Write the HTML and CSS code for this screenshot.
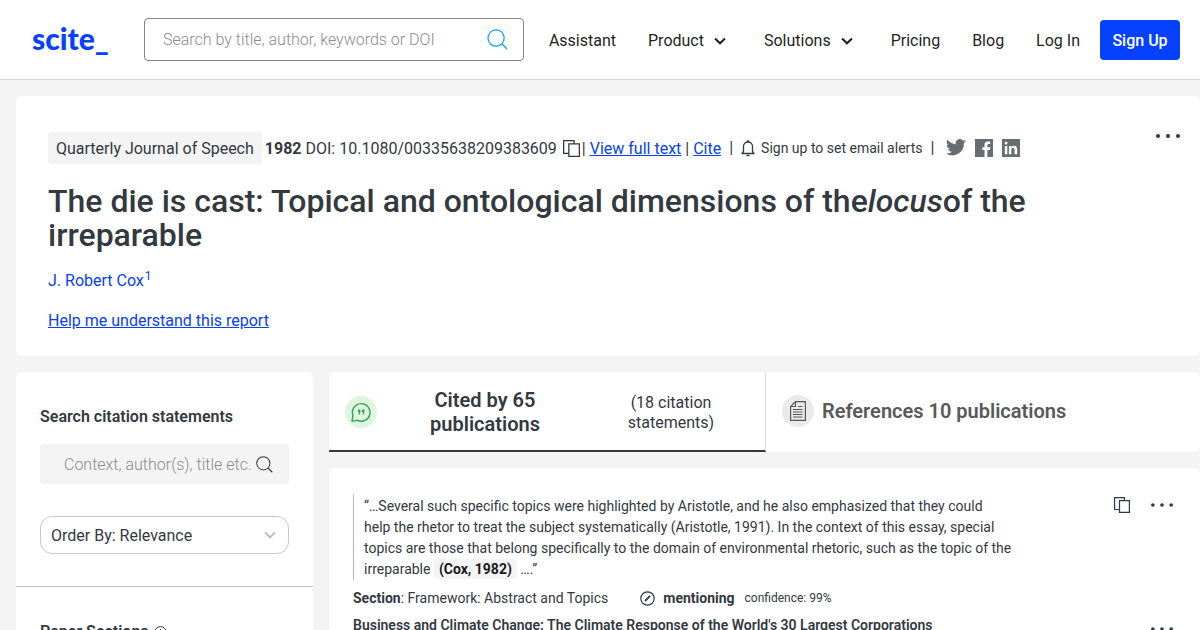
FILE: index.html
```html
<!DOCTYPE html>
<html lang="en">
<head>
<meta charset="utf-8">
<meta name="viewport" content="width=device-width, initial-scale=1">
<title>The die is cast: Topical and ontological dimensions of the locus of the irreparable</title>
<link rel="stylesheet" href="styles.css">
</head>
<body>
<svg class="defs" width="0" height="0" aria-hidden="true">
  <symbol id="copy" viewBox="0 0 16 16"><path d="M5 12.500H.6V.6H10.400V3M5.500 3.600H15.400V15.400H5.500Z" fill="none" stroke="currentColor" stroke-width="1.200"/></symbol>
  <symbol id="search" viewBox="0 0 22 22"><circle cx="9.500" cy="9.500" r="8.500" fill="none" stroke="currentColor" stroke-width="1.300"/><path d="M15.500 15.500L21 21" stroke="currentColor" stroke-width="1.500"/></symbol>
  <symbol id="chevron" viewBox="0 0 12 8"><path d="M1 1.500L6 6.300L11 1.500" fill="none" stroke="currentColor" stroke-width="2"/></symbol>
  <symbol id="dots" viewBox="0 0 24 4"><circle cx="2" cy="2" r="2"/><circle cx="12" cy="2" r="2"/><circle cx="22" cy="2" r="2"/></symbol>
</svg>

<header class="header">
  <a class="logo" href="#">scite_</a>
  <form class="search" role="search">
    <input class="search-input" type="search" aria-label="Search papers" placeholder="Search by title, author, keywords or DOI">
    <button class="icon-button search-button" type="button" aria-label="Search"><svg width="21" height="21"><use href="#search"/></svg></button>
  </form>
  <nav class="nav">
    <a class="nav-link" href="#">Assistant</a>
    <button class="nav-link" type="button">Product <svg width="12" height="8"><use href="#chevron"/></svg></button>
    <button class="nav-link" type="button">Solutions <svg width="12" height="8"><use href="#chevron"/></svg></button>
    <a class="nav-link" href="#">Pricing</a>
    <a class="nav-link" href="#">Blog</a>
    <a class="nav-link" href="#">Log In</a>
  </nav>
  <a class="signup" href="#">Sign Up</a>
</header>

<main class="page">
  <section class="card paper">
    <div class="paper-meta">
      <span class="journal">Quarterly Journal of Speech</span>
      <span class="meta-text"><strong>1982</strong> DOI: 10.1080/00335638209383609</span>
      <button class="icon-button copy-doi" type="button" aria-label="Copy DOI"><svg width="17" height="17"><use href="#copy"/></svg></button>
      <span class="meta-text">| <a href="#">View full text</a> | <a href="#">Cite</a></span>
      <span class="rule">|</span>
      <button class="alerts" type="button">
        <svg class="line" width="14" height="17" viewBox="0 0 14 17"><path d="M1 13.500H13L11.500 11.500V6.500C11.500 3.500 9.500 2 7 2S2.500 3.500 2.500 6.500V11.500Z" stroke-width="1.300" stroke-linejoin="round"/><path d="M7 0V2M5.500 15.500H8.500" stroke-width="1.500"/></svg>
        Sign up to set email alerts
      </button>
      <span class="rule">|</span>
      <span class="social">
        <a href="#" aria-label="Share on Twitter"><svg width="20" height="18" viewBox="0 3 24 20"><path d="M23.950 4.600a10 10 0 0 1-2.800.8 4.900 4.900 0 0 0 2.100-2.700c-1 .6-2 1-3.100 1.200a4.900 4.900 0 0 0-8.400 4.500A14 14 0 0 1 1.650 3.200a4.900 4.900 0 0 0 1.500 6.500 4.900 4.900 0 0 1-2.200-.6v.1a4.900 4.900 0 0 0 3.900 4.800 5 5 0 0 1-2.200.1 4.900 4.900 0 0 0 4.600 3.400A9.900 9.900 0 0 1 0 19.500 14 14 0 0 0 21.500 7.100a10 10 0 0 0 2.450-2.500z"/></svg></a>
        <a href="#" aria-label="Share on Facebook"><svg width="18" height="18" viewBox="0 0 18 18"><path d="M0 0H18V18H12.400V11H14.800L15.200 8.200H12.400V6.400C12.400 5.500 12.800 5.100 13.600 5.100H15.200V2.600H12.900C10.500 2.600 9.500 4.100 9.500 6.100V8.200H7.300V11H9.500V18H0Z"/></svg></a>
        <a href="#" aria-label="Share on LinkedIn"><svg width="18" height="18" viewBox="0 0 18 18"><path fill-rule="evenodd" d="M0 0H18V18H0ZM2.800 7V15.200H5.300V7ZM4 2.700A1.450 1.450 0 1 0 4.100 5.600A1.450 1.450 0 1 0 4 2.700ZM6.900 7V15.200H9.400V10.800C9.400 8.500 12.600 8.300 12.600 10.800V15.200H15.200V10.200C15.200 6.200 10.900 6 9.400 8.100V7Z"/></svg></a>
      </span>
    </div>
    <button class="icon-button paper-more" type="button" aria-label="More options"><svg width="24" height="4"><use href="#dots"/></svg></button>
    <h1 class="title">The die is cast: Topical and ontological dimensions of the<em>locus</em>of the irreparable</h1>
    <p class="author"><a href="#">J. Robert Cox<sup>1</sup></a></p>
    <p class="help"><a href="#">Help me understand this report</a></p>
  </section>

  <div class="columns">
    <aside class="card sidebar">
      <div class="filters">
        <label class="side-title" for="citation-search">Search citation statements</label>
        <div class="citation-search">
          <input id="citation-search" type="text" placeholder="Context, author(s), title etc.">
          <svg width="17" height="17"><use href="#search"/></svg>
        </div>
        <div class="order">
          <select aria-label="Order citations"><option>Order By: Relevance</option><option>Order By: Newest First</option></select>
          <svg width="12" height="8"><use href="#chevron"/></svg>
        </div>
      </div>
      <div class="sections">
        <h2 class="side-title">Paper Sections <svg class="line" width="13" height="13" viewBox="0 0 13 13"><circle cx="6.500" cy="6.500" r="5.900"/><path d="M6.500 3V4.300M6.500 5.500V10"/></svg></h2>
      </div>
    </aside>

    <div class="results">
      <div class="tabs" role="tablist">
        <button class="tab tab-active" type="button" role="tab" aria-selected="true">
          <span class="badge badge-green"><svg width="20" height="20" viewBox="0 0 20 20"><path d="M1 19L2 13.500A8.800 8.800 0 1 1 6 18.100Q3.500 19.200 1 19Z" fill="none" stroke="currentColor" stroke-width="1.400" stroke-linejoin="round"/><path d="M7 7.500H9.400V10.500Q9.200 12.600 7.300 13Q8.200 11.500 8.100 10.300H7ZM11 7.500H13.400V10.500Q13.200 12.600 11.300 13Q12.200 11.500 12.100 10.300H11Z"/></svg></span>
          <span class="tab-title">Cited by 65 publications</span>
          <span class="tab-note">(18 citation statements)</span>
        </button>
        <button class="tab" type="button" role="tab" aria-selected="false">
          <span class="badge"><svg class="line" width="16" height="20" viewBox="0 0 16 20"><path d="M5.500.6H15.400V19.400H.6V5.500ZM5.500.6V5.500H.6" stroke-width="1.200"/><path d="M8 5.500H12.500M3 8.500H12.500M3 11H12.500M3 13.500H12.500M3 16H12.500"/></svg></span>
          <span class="tab-title">References 10 publications</span>
        </button>
      </div>

      <article class="card citation">
        <div class="citation-body">
          <blockquote class="quote">“…Several such specific topics were highlighted by Aristotle, and he also emphasized that they could<br>
            help the rhetor to treat the subject systematically (Aristotle, 1991). In the context of this essay, special<br>
            topics are those that belong specifically to the domain of environmental rhetoric, such as the topic of the irreparable <mark>(Cox, 1982)</mark> ….”</blockquote>
          <div class="citation-meta">
            <span><strong>Section</strong>: Framework: Abstract and Topics</span>
            <span class="kind"><svg class="line" width="15" height="15" viewBox="0 0 15 15"><circle cx="7.500" cy="7.500" r="6.700" stroke-width="1.200"/><path d="M5 10L10 5" stroke-width="1.800"/></svg><strong>mentioning</strong><small>confidence: 99%</small></span>
          </div>
          <h3 class="source"><a href="#">Business and Climate Change: The Climate Response of the World's 30 Largest Corporations</a></h3>
        </div>
        <div class="citation-actions">
          <button class="icon-button" type="button" aria-label="Copy citation"><svg width="16" height="16"><use href="#copy"/></svg></button>
          <button class="icon-button" type="button" aria-label="Citation options"><svg width="22" height="4"><use href="#dots"/></svg></button>
        </div>
        <div class="source-actions">
          <button class="icon-button" type="button" aria-label="Source options"><svg width="22" height="4"><use href="#dots"/></svg></button>
        </div>
      </article>
    </div>
  </div>
</main>
</body>
</html>
```
FILE: styles.css
```css
* { box-sizing: border-box; }

body {
  margin: 0;
  background: #f4f4f4;
  color: #32393f;
  font: 16px/20px Roboto, "Liberation Sans", sans-serif;
}

button, input, select { font: inherit; color: inherit; }
button { border: 0; padding: 0; background: none; cursor: pointer; }
a { color: #0740f5; }
svg { display: block; flex: none; fill: currentColor; }
.line { fill: none; stroke: currentColor; }
h1, h2, h3, p, blockquote { margin: 0; }
strong { font-weight: 700; }
.defs { position: absolute; }
.card { background: #fff; border-radius: 6px; }

.header {
  display: flex;
  align-items: center;
  height: 80px;
  padding: 0 20px 0 32px;
  background: #fff;
  border-bottom: 1px solid #d6d6d6;
}
.logo {
  width: 112px;
  padding-bottom: 4px;
  color: #0541ff;
  font: 900 30px/32px Lato, sans-serif;
  text-decoration: none;
}
.search {
  display: flex;
  align-items: center;
  flex: 1;
  height: 43px;
  margin-right: 25px;
  padding: 0 15px 0 18px;
  border: 1px solid #858585;
  border-radius: 4px;
}
.search-input {
  flex: 1;
  min-width: 0;
  padding: 0;
  border: 0;
  outline: 0;
  background: none;
  font-weight: 300;
}
input::placeholder { color: #8c8c8c; opacity: 1; }
.search-button { color: #15a0f5; }
.nav { display: flex; gap: 32px; padding-top: 2px; }
.nav-link {
  display: flex;
  align-items: center;
  gap: 10px;
  color: #1d1f21;
  text-decoration: none;
}
.nav-link svg { margin-right: 6px; }
.signup {
  min-width: 80px;
  margin-left: 20px;
  padding: 11px 10px 9px;
  border-radius: 4px;
  background: #0541ff;
  color: #fff;
  font-weight: 500;
  text-align: center;
  text-decoration: none;
}

.page { padding: 16px 0 0 16px; }
.paper { position: relative; padding: 36px 32px 25px; }
.paper-meta { display: flex; align-items: center; white-space: nowrap; }
.journal {
  margin-right: 3px;
  padding: 7px 8px 5px;
  border-radius: 4px;
  background: #f4f4f4;
}
.meta-text { padding-top: 2px; }
.copy-doi { margin: 0 2px 0 6px; }
.rule { margin: 0 8px; }
.alerts { display: flex; align-items: center; gap: 6px; font-size: 14px; }
.social { display: flex; gap: 9px; margin-left: 4px; }
.social a { color: #676d71; }
.paper-more { position: absolute; top: 38px; right: 20px; }
.title {
  margin-top: 20px;
  padding-right: 120px;
  font-size: 32px;
  line-height: 34px;
  font-weight: 500;
}
.author { margin-top: 19px; }
.author a { text-decoration: none; }
.author sup { margin-left: 1px; font-size: 12px; line-height: 0; }
.help { margin-top: 20px; }

.columns {
  display: grid;
  grid-template-columns: 297px minmax(0, 1fr);
  gap: 16px;
  margin-top: 16px;
}
.filters { padding: 35px 24px 32px; border-bottom: 1px solid #bfbfbf; }
.side-title {
  display: flex;
  align-items: center;
  gap: 5px;
  font-size: 16px;
  line-height: 20px;
  font-weight: 600;
}
.citation-search {
  display: flex;
  align-items: center;
  height: 40px;
  margin: 17px 0 32px;
  padding: 0 16px 0 24px;
  border-radius: 4px;
  background: #f4f4f4;
}
.citation-search input {
  flex: 1;
  min-width: 0;
  padding: 2px 0 0;
  border: 0;
  outline: 0;
  background: none;
  font-weight: 300;
}
.order { display: grid; align-items: center; }
.order > * { grid-area: 1 / 1; }
.order select {
  width: 100%;
  height: 38px;
  padding: 2px 32px 0 10px;
  border: 1px solid #c9c9c9;
  border-radius: 12px;
  appearance: none;
  background: #fff;
}
.order svg { justify-self: end; margin-right: 13px; color: #bfbfbf; pointer-events: none; }
.sections { padding: 35px 24px; }

.tabs { display: grid; grid-template-columns: 437px minmax(0, 1fr); height: 80px; }
.tab {
  display: flex;
  align-items: center;
  gap: 8px;
  padding: 0 16px 2px;
  background: #fff;
  color: #595959;
  text-align: center;
  border-radius: 0 6px 6px 0;
}
.tab-active {
  gap: 0;
  padding-top: 2px;
  padding-bottom: 0;
  border-right: 1px solid #dedede;
  border-bottom: 2px solid #32393f;
  border-radius: 6px 0 0 0;
  color: #32393f;
}
.tab-title { font-size: 20px; line-height: 24px; font-weight: 600; }
.tab-active .tab-title { flex: 1; padding: 0 48px; }
.tab-note { width: 156px; padding: 2px 24px 0; }
.badge {
  display: grid;
  place-items: center;
  flex: none;
  width: 32px;
  height: 32px;
  border-radius: 50%;
  background: #eaeaea;
}
.badge-green { background: #dff5e1; color: #31a64a; }

.citation {
  display: grid;
  grid-template-columns: minmax(0, 672px) 1fr;
  margin-top: 16px;
  padding: 27px 27px 24px 24px;
  font-size: 14px;
}
.citation-body { grid-row: 1 / 3; }
.quote {
  padding: 1px 0 0 10px;
  border-left: 1px solid #b5b5b5;
  line-height: 21px;
}
mark {
  padding: 2px 5px;
  border-radius: 4px;
  background: #f4f4f4;
  color: #17191b;
  font-weight: 700;
}
.citation-meta { display: flex; align-items: center; gap: 32px; margin-top: 8px; }
.kind { display: flex; align-items: center; gap: 8px; }
.kind small { margin-left: 2px; font-size: 12px; }
.source { margin-top: 7px; font-size: 14px; line-height: 20px; font-weight: 600; }
.source a { color: inherit; text-decoration: none; }
.citation-actions { display: flex; justify-content: flex-end; align-items: center; gap: 21px; height: 20px; }
.source-actions { display: flex; justify-content: flex-end; align-self: end; padding-bottom: 4px; }
```
